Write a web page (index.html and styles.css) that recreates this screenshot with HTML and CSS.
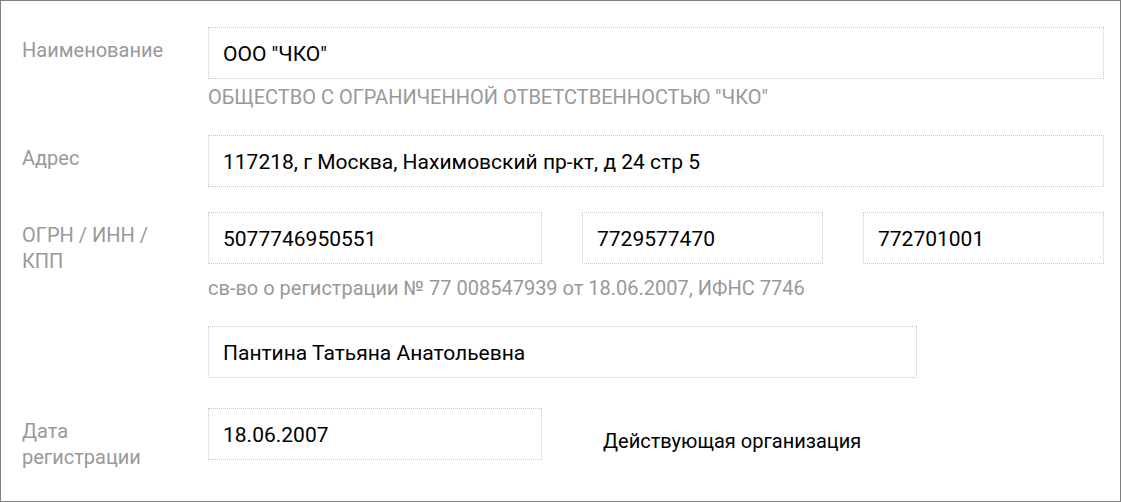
FILE: index.html
```html
<!DOCTYPE html>
<html lang="ru">
<head>
<meta charset="utf-8">
<link rel="stylesheet" href="styles.css">
</head>
<body>
<div class="card">
  <div class="row">
    <div class="label">Наименование</div>
    <div class="field">
      <div class="input w-full">ООО "ЧКО"</div>
      <div class="hint hint-upper">ОБЩЕСТВО С ОГРАНИЧЕННОЙ ОТВЕТСТВЕННОСТЬЮ "ЧКО"</div>
    </div>
  </div>
  <div class="row">
    <div class="label">Адрес</div>
    <div class="field">
      <div class="input w-full">117218, г Москва, Нахимовский пр-кт, д 24 стр 5</div>
    </div>
  </div>
  <div class="row">
    <div class="label">ОГРН / ИНН /<br>КПП</div>
    <div class="field">
      <div class="inputs">
        <div class="input w-ogrn">5077746950551</div>
        <div class="input w-inn">7729577470</div>
        <div class="input w-inn">772701001</div>
      </div>
      <div class="hint hint-reg">св-во о регистрации № 77 008547939 от 18.06.2007, ИФНС 7746</div>
    </div>
  </div>
  <div class="row row-head">
    <div class="label"></div>
    <div class="field">
      <div class="input w-head">Пантина Татьяна Анатольевна</div>
    </div>
  </div>
  <div class="row">
    <div class="label">Дата<br>регистрации</div>
    <div class="field field-inline">
      <div class="input w-ogrn">18.06.2007</div>
      <div class="status">Действующая организация</div>
    </div>
  </div>
</div>
</body>
</html>
```
FILE: styles.css
```css
html, body {
  margin: 0;
  padding: 0;
  background: #fff;
}
body {
  font-family: Roboto, "Liberation Sans", sans-serif;
}
.card {
  box-sizing: border-box;
  width: 1121px;
  height: 502px;
  border: 1px solid #808080;
  padding: 26px 16px 0 21px;
}
.row {
  display: grid;
  grid-template-columns: 186px 896px;
  align-items: start;
  margin-bottom: 25px;
}
.row-head {
  margin-bottom: 30px;
}
.label {
  padding-top: 10px;
  font-size: 20px;
  line-height: 26px;
  color: #999;
}
.input {
  box-sizing: border-box;
  height: 52px;
  border: 1px dotted #c8c8c8;
  padding: 2px 14px 0;
  display: flex;
  align-items: center;
  font-size: 21px;
  color: #000;
}
.w-full { width: 896px; }
.w-ogrn { width: 334px; }
.w-inn { width: 241px; }
.w-head { width: 709px; }
.inputs {
  display: flex;
  gap: 40px;
}
.hint {
  font-size: 20px;
  line-height: 26px;
  color: #999;
}
.hint-upper { margin-top: 5px; }
.hint-reg { margin-top: 11px; }
.field-inline {
  display: flex;
  align-items: flex-start;
}
.status {
  margin-left: 61px;
  margin-top: 20px;
  font-size: 20px;
  line-height: 26px;
  color: #000;
}
```
